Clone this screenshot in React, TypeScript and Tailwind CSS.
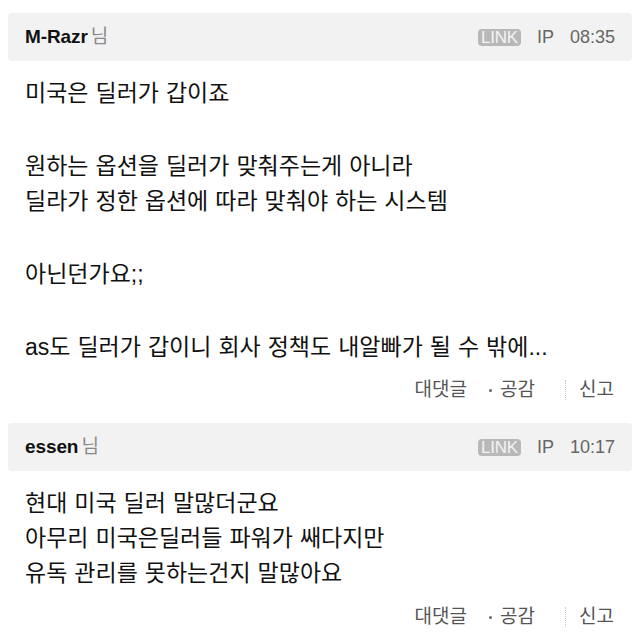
import React from "react";

const FONT = "font-['Liberation_Sans','Noto_Sans_CJK_KR',sans-serif]";

function Header({ name, time }: { name: string; time: string }) {
  return (
    <div className="h-[48px] bg-[#f2f2f2] rounded-[4px] flex items-center justify-between px-[17px]">
      <div className="flex items-center">
        <span className="text-[19px] font-bold text-[#111] tracking-[-0.1px]">{name}</span>
        <span className="text-[19px] text-[#8a8a8a] ml-[3px]">님</span>
      </div>
      <div className="flex items-center text-[18px] text-[#666]">
        <span className="bg-[#b8b8b8] text-[#f4f4f4] text-[17px] leading-[17px] h-[17px] px-[3px] rounded-[4px] tracking-[-0.2px]">
          LINK
        </span>
        <span className="ml-[16px]">IP</span>
        <span className="ml-[16px]">{time}</span>
      </div>
    </div>
  );
}

function Footer({ mt }: { mt: string }) {
  return (
    <div className={`${mt} h-[30px] flex items-center justify-end pr-[18px] text-[19px] text-[#555]`}>
      <span>대댓글</span>
      <span className="ml-[22px] w-[3px] h-[3px] rounded-full bg-[#666]" />
      <span className="ml-[8px]">공감</span>
      <span className="ml-[30px] h-[20px] border-l border-dotted border-[#c8c8c8]" />
      <span className="ml-[13px]">신고</span>
    </div>
  );
}

function Line({ children }: { children?: React.ReactNode }) {
  return <div className="h-[35px] leading-[35px] whitespace-nowrap">{children}</div>;
}

function Spacer() {
  return <div className="h-[38px]" />;
}

export default function App() {
  return (
    <div className={`w-[640px] h-[637px] bg-white overflow-hidden ${FONT}`}>
      <div className="pt-[13px] px-[8px]">
        <Header name="M-Razr" time="08:35" />
        <div className="mt-[14.5px] px-[17px] text-[23px] text-[#111] [word-spacing:0.6px]">
          <Line>미국은 딜러가 갑이죠</Line>
          <Spacer />
          <Line>원하는 옵션을 딜러가 맞춰주는게 아니라</Line>
          <Line>딜라가 정한 옵션에 따라 맞춰야 하는 시스템</Line>
          <Spacer />
          <Line>아닌던가요;;</Line>
          <Spacer />
          <Line>as도 딜러가 갑이니 회사 정책도 내알빠가 될 수 밖에...</Line>
        </div>
        <Footer mt="mt-[10.5px]" />

        <div className="mt-[18px]">
          <Header name="essen" time="10:17" />
        </div>
        <div className="mt-[14.5px] px-[17px] text-[23px] text-[#111] [word-spacing:0.6px]">
          <Line>현대 미국 딜러 말많더군요</Line>
          <Line>아무리 미국은딜러들 파워가 쌔다지만</Line>
          <Line>유독 관리를 못하는건지 말많아요</Line>
        </div>
        <Footer mt="mt-[11.5px]" />
      </div>
    </div>
  );
}
